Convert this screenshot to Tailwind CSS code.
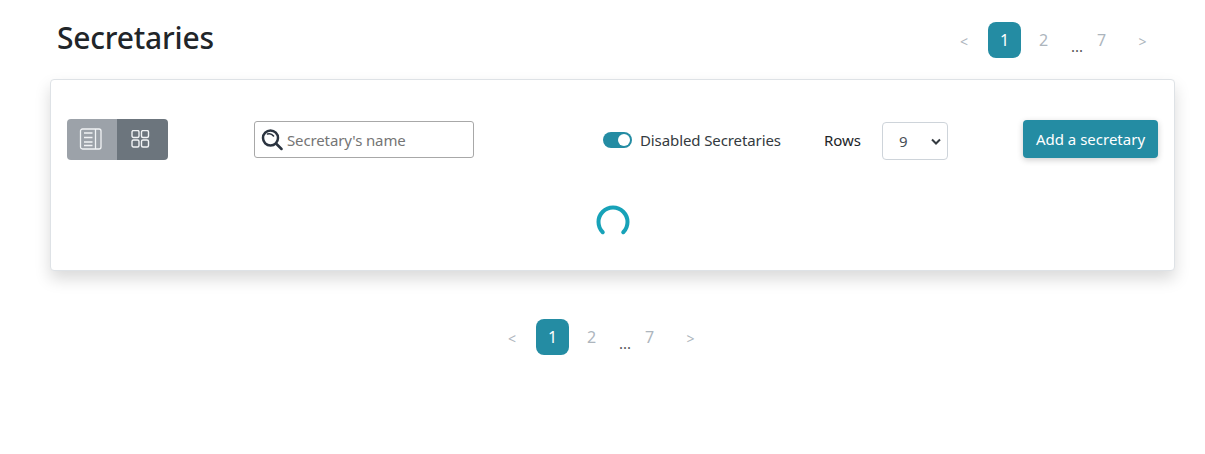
<!DOCTYPE html>
<html>
<head>
<meta charset="utf-8">
<script src="https://cdn.jsdelivr.net/npm/@tailwindcss/browser@4"></script>
</head>
<body class="bg-white font-['Noto_Sans','Open_Sans',sans-serif] text-[#212529] h-[454px] w-[1205px] overflow-hidden">
  <header class="flex items-start justify-between h-[79px] pl-[57px] pr-[46px]">
    <h1 class="text-[30px] leading-[38px] mt-[19px] font-medium tracking-[-0.2px] text-[#212529]">Secretaries</h1>
    <nav class="flex items-start gap-[6px] mt-[22px] text-[#adb5bd] text-[16px]">
      <span class="w-[34px] h-[36px] pt-[2px] pr-[2px] flex items-center justify-center text-[14px]">&lt;</span>
      <span class="w-[33px] h-[36px] flex items-center justify-center rounded-lg bg-[#248ca3] text-white">1</span>
      <span class="w-[33px] h-[36px] flex items-center justify-center">2</span>
      <span class="w-[13px] h-[36px] pl-[5px] text-[#555] text-[15px] leading-[20px] pt-[14px]">...</span>
      <span class="w-[33px] h-[36px] flex items-center justify-center">7</span>
      <span class="w-[33px] h-[36px] pt-[2px] ml-[2px] flex items-center justify-center text-[14px]">&gt;</span>
    </nav>
  </header>

  <main class="mx-[50px] w-[1125px] h-[192px] bg-white border border-[#dee2e6] rounded shadow-[0_8px_16px_rgba(0,0,0,0.15)]">
    <div class="flex items-center h-[119px] pl-[16px] pr-[16px]">
      <div class="flex w-[101px] h-[41px] rounded overflow-hidden shrink-0">
        <div class="w-[50px] bg-[#9ca2a9] flex items-center justify-center pr-[2px]">
          <svg width="24" height="24" viewBox="0 0 24 24" fill="none" stroke="#f1f3f5" stroke-width="1.300">
            <rect x="1.500" y="1" width="20.500" height="20" rx="2"/>
            <path d="M16.500 1v20M5 5h8.500M5 9.500h8.500M5 14h8.500M5 17.500h8.500"/>
          </svg>
        </div>
        <div class="w-[51px] bg-[#6c757d] flex items-center justify-center pr-[4px]">
          <svg width="19" height="20" viewBox="0 0 19 20" fill="none" stroke="#f1f3f5" stroke-width="1.400">
            <rect x="1" y="0.500" width="7" height="7" rx="1.500"/>
            <rect x="10.500" y="0.500" width="7" height="7" rx="1.500"/>
            <rect x="1" y="10" width="7" height="7" rx="1.500"/>
            <rect x="10.500" y="10" width="7" height="7" rx="1.500"/>
          </svg>
        </div>
      </div>

      <label class="ml-[86px] w-[220px] h-[37px] flex items-center gap-[4px] pl-[6px] border border-[#a8a8a8] rounded-[3px] shrink-0">
        <svg width="22" height="22" viewBox="0 0 22 22" fill="none" stroke="#2b3440" stroke-width="2.500" stroke-linecap="round">
          <circle cx="9.500" cy="9" r="7.500"/>
          <path d="M15 14.500l5.500 5.500"/>
          <path d="M6.500 5a5.500 5.500 0 0 1 6 2" stroke-width="1.600"/>
        </svg>
        <span class="pt-[1px] text-[15px] tracking-[-0.13px] text-[#757575]">Secretary's name</span>
      </label>

      <div class="ml-[129px] mt-[1px] flex items-center gap-[8px] shrink-0">
        <span class="w-[29px] h-[16px] rounded-full bg-[#248ca3] flex items-center justify-end pr-[2px]">
          <span class="w-[12px] h-[12px] rounded-full bg-white"></span>
        </span>
        <span class="text-[15px] tracking-[-0.1px] text-[#343a40]">Disabled Secretaries</span>
      </div>

      <span class="ml-[43px] mt-[1px] text-[15px] text-[#212529] shrink-0">Rows</span>

      <div class="ml-[21px] mt-[3px] w-[66px] h-[38px] border border-[#ced4da] rounded flex items-center justify-between pl-[16px] pr-[6px] text-[15px] text-[#495057] shrink-0">
        <span class="pt-[1px]">9</span>
        <svg width="10" height="7" viewBox="0 0 10 7" fill="none" stroke="#343a40" stroke-width="2"><path d="M1 1.500l4 4 4-4"/></svg>
      </div>

      <button class="ml-[75px] w-[135px] h-[38px] -mt-[1px] rounded bg-[#248ca3] text-white text-[15px] shadow-[0_2px_6px_rgba(0,0,0,0.2)] shrink-0">Add a secretary</button>
    </div>

    <div class="flex justify-center pt-[6px]">
      <svg width="34" height="34" viewBox="0 0 34 34" fill="none" stroke="#17a2b8" stroke-width="4" stroke-linecap="round">
        <path d="M6.750 27.250A14.500 14.500 0 1 1 27.250 27.250"/>
      </svg>
    </div>
  </main>

  <nav class="flex items-start justify-center gap-[6px] mt-[48px] pr-[2px] text-[#adb5bd] text-[16px]">
    <span class="w-[34px] h-[36px] pt-[2px] pr-[2px] flex items-center justify-center text-[14px]">&lt;</span>
    <span class="w-[33px] h-[36px] flex items-center justify-center rounded-lg bg-[#248ca3] text-white">1</span>
    <span class="w-[33px] h-[36px] flex items-center justify-center">2</span>
    <span class="w-[13px] h-[36px] pl-[5px] text-[#555] text-[15px] leading-[20px] pt-[14px]">...</span>
    <span class="w-[33px] h-[36px] flex items-center justify-center">7</span>
    <span class="w-[33px] h-[36px] pt-[2px] ml-[2px] flex items-center justify-center text-[14px]">&gt;</span>
  </nav>
</body>
</html>
